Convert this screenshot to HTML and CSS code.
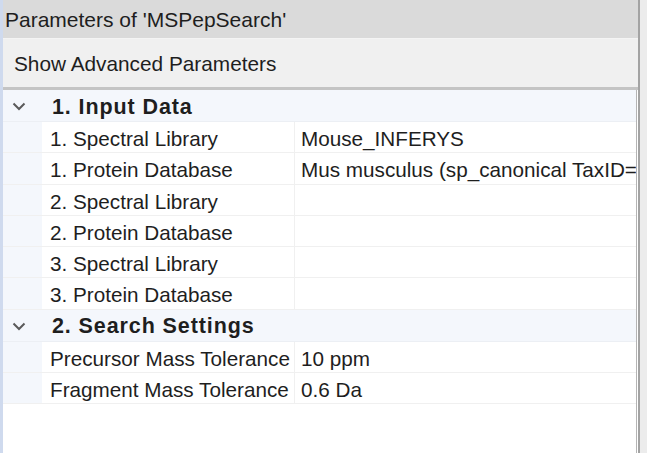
FILE: index.html
```html
<!DOCTYPE html>
<html lang="en">
<head>
    <meta charset="UTF-8">
    <title>Parameters of 'MSPepSearch'</title>
    <link rel="stylesheet" href="styles.css">
</head>
<body>

<div class="window">
    <div class="title">Parameters of 'MSPepSearch'</div>

    <div class="toolbar">Show Advanced Parameters</div>

    <div class="grid">
        <!-- Input data -->
        <div class="cat">
            <span class="toggle"><svg width="14" height="9" viewBox="0 0 14 9"><path d="M1.5 1.5 L7 7 L12.5 1.5" fill="none" stroke="#5a5a5a" stroke-width="2"/></svg></span>
            <span class="cat-name">1. Input Data</span>
        </div>
        <div class="row"><div class="gutter"></div><div class="name">1. Spectral Library</div><div class="value">Mouse_INFERYS</div></div>
        <div class="row"><div class="gutter"></div><div class="name">1. Protein Database</div><div class="value">Mus musculus (sp_canonical TaxID=10090)</div></div>
        <div class="row"><div class="gutter"></div><div class="name">2. Spectral Library</div><div class="value"></div></div>
        <div class="row"><div class="gutter"></div><div class="name">2. Protein Database</div><div class="value"></div></div>
        <div class="row"><div class="gutter"></div><div class="name">3. Spectral Library</div><div class="value"></div></div>
        <div class="row"><div class="gutter"></div><div class="name">3. Protein Database</div><div class="value"></div></div>

        <!-- Search settings -->
        <div class="cat">
            <span class="toggle"><svg width="14" height="9" viewBox="0 0 14 9"><path d="M1.5 1.5 L7 7 L12.5 1.5" fill="none" stroke="#5a5a5a" stroke-width="2"/></svg></span>
            <span class="cat-name">2. Search Settings</span>
        </div>
        <div class="row"><div class="gutter"></div><div class="name">Precursor Mass Tolerance</div><div class="value">10 ppm</div></div>
        <div class="row"><div class="gutter"></div><div class="name">Fragment Mass Tolerance</div><div class="value">0.6 Da</div></div>
    </div>
</div>

</body>
</html>
```

FILE: styles.css
```css
body {
    margin: 0;
    padding: 0;
    background: linear-gradient(to right, white 0, white 3px, #ececec 3px);
    font-family: "Liberation Sans", Arial, sans-serif;
    color: #1e1e1e;
}
.window {
    width: 635px;
    height: 453px;
    border-left: 3px solid #cfdaee;
    border-right: 2px solid #a3a3a3;
    background: white;
    display: flex;
    flex-direction: column;
    overflow: hidden;
}
.title {
    height: 38px;
    line-height: 40px;
    padding-left: 2px;
    background: #dadada;
    border-bottom: 1px solid #f4f4f4;
    font-size: 21px;
    white-space: nowrap;
    overflow: hidden;
}
.toolbar {
    height: 48px;
    line-height: 50px;
    padding-left: 11px;
    background: #f0f0f0;
    border-bottom: 3px solid #c4c4c4;
    font-size: 20.8px;
    overflow: hidden;
}
.grid {
    flex: 1;
    margin-right: 1px;
    border-right: 1px solid #b4b4b4;
    background: white;
}
.cat {
    display: flex;
    align-items: center;
    height: 31px;
    background: #f4f7fc;
    border-bottom: 1px solid #eceff4;
}
.toggle {
    width: 49px;
    padding-left: 9px;
    padding-top: 2px;
    box-sizing: border-box;
    display: flex;
    align-items: center;
}
.cat-name {
    font-weight: bold;
    font-size: 21.5px;
    letter-spacing: 0.9px;
    padding-top: 3px;
}
.row {
    display: flex;
    height: 30.3px;
    border-bottom: 1px solid #f0f0f0;
    font-size: 20.7px;
    line-height: 34px;
}
.gutter {
    width: 39px;
    background: #f4f7fc;
}
.name {
    width: 244px;
    padding-left: 8px;
    border-right: 1px solid #f0f0f0;
    white-space: nowrap;
    overflow: hidden;
}
.value {
    flex: 1;
    padding-left: 6px;
    white-space: nowrap;
    overflow: hidden;
}
```
